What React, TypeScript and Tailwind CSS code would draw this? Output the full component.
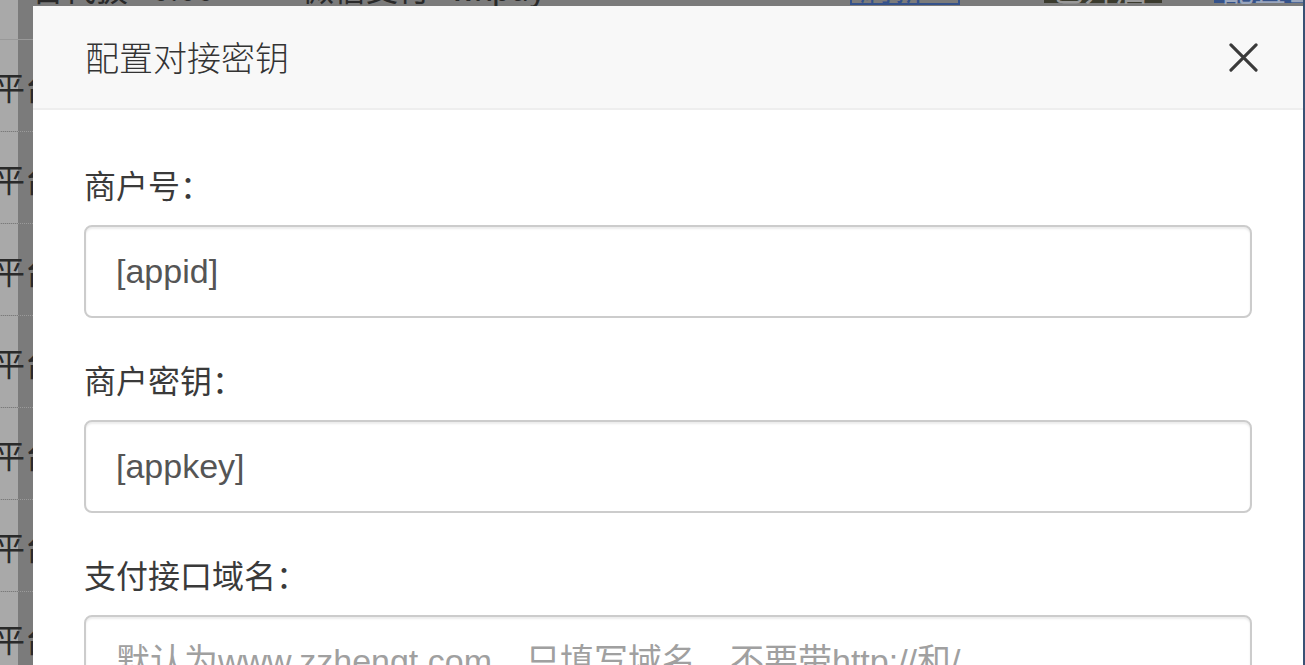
const rows = Array.from({ length: 8 });

function Backdrop() {
  return (
    <div className="absolute inset-0 bg-[#7b7b7b]">
      {/* top row fragment above the dialog */}
      <div className="flex h-[40px] items-end border-b border-[#999] text-[32px] leading-none text-[#2a2a2a]">
        <div className="flex h-full w-[18px] shrink-0 items-end bg-[#a9a9a9]" />
        <div className="relative -top-[34px] flex items-center whitespace-nowrap pl-[14px]">
          <span className="w-[120px]">台代扱</span>
          <span className="w-[150px]">0.00</span>
          <span className="w-[148px]">微信支付</span>
          <span className="w-[400px]">wxpay</span>
          <span className="w-[110px] border-2 border-[#35528a] px-2 text-[#35528a]">刷新</span>
          <span className="ml-[84px] w-[118px] bg-[#3b3b2e] px-2 text-[#999]">已开启</span>
          <span className="ml-[52px] bg-[#35528a] px-2 text-[#9aa6bd]">配置密钥</span>
        </div>
      </div>
      {rows.map((_, i) => (
        <div key={i} className="flex h-[92px] border-b border-dotted border-[#9a9a9a]">
          <div className="w-[18px] shrink-0 bg-[#a9a9a9]" />
          <div
            className="relative -left-[25px] pt-[30px] text-[32px] leading-none text-[#2a2a2a]"
            style={{ fontFamily: '"Noto Sans CJK SC", sans-serif' }}
          >
            平台
          </div>
        </div>
      ))}
      <div className="absolute right-0 top-0 h-full w-[2px] bg-[#3a5174]" />
    </div>
  );
}

function Field({ label, value, placeholder }: { label: string; value?: string; placeholder?: string }) {
  return (
    <div className="mb-[38px]">
      <div className="mb-[18px] text-[32px] leading-[46px] text-[#3a3a3a]">{label}</div>
      <input
        readOnly
        defaultValue={value}
        placeholder={placeholder}
        className="block h-[93px] w-full rounded-[8px] border-2 border-[#cccccc] bg-white px-[30px] text-[34px] text-[#555] shadow-[inset_0_2px_2px_rgba(0,0,0,0.08)] outline-none placeholder:text-[#a0a0a0]"
        style={{ fontFamily: '"Liberation Sans", "Noto Sans CJK SC", sans-serif' }}
      />
    </div>
  );
}

export default function App() {
  return (
    <div
      className="relative h-[665px] w-full overflow-hidden"
      style={{ fontFamily: '"Noto Sans CJK SC", "Liberation Sans", sans-serif' }}
    >
      <Backdrop />

      {/* Dialog */}
      <div className="absolute left-[33px] top-[6px] h-[800px] w-[1270px] bg-white">
        <div className="flex h-[104px] items-center justify-between border-b-2 border-[#eeeeee] bg-[#f8f8f8] pl-[52px] pr-[44px]">
          <h4 className="text-[34px] font-light leading-none text-[#333]">配置对接密钥</h4>
          <button className="flex h-[32px] w-[32px] items-center justify-center">
            <svg viewBox="0 0 30 30" className="h-[29px] w-[29px]">
              <path d="M2 2 L28 28 M28 2 L2 28" stroke="#3a3a3a" strokeWidth="3.2" strokeLinecap="round" />
            </svg>
          </button>
        </div>
        <div className="p-[51px]">
          <Field label="商户号：" value="[appid]" />
          <Field label="商户密钥：" value="[appkey]" />
          <Field label="支付接口域名：" placeholder="默认为www.zzhengt.com，只填写域名，不要带http://和/" />
        </div>
      </div>
    </div>
  );
}
